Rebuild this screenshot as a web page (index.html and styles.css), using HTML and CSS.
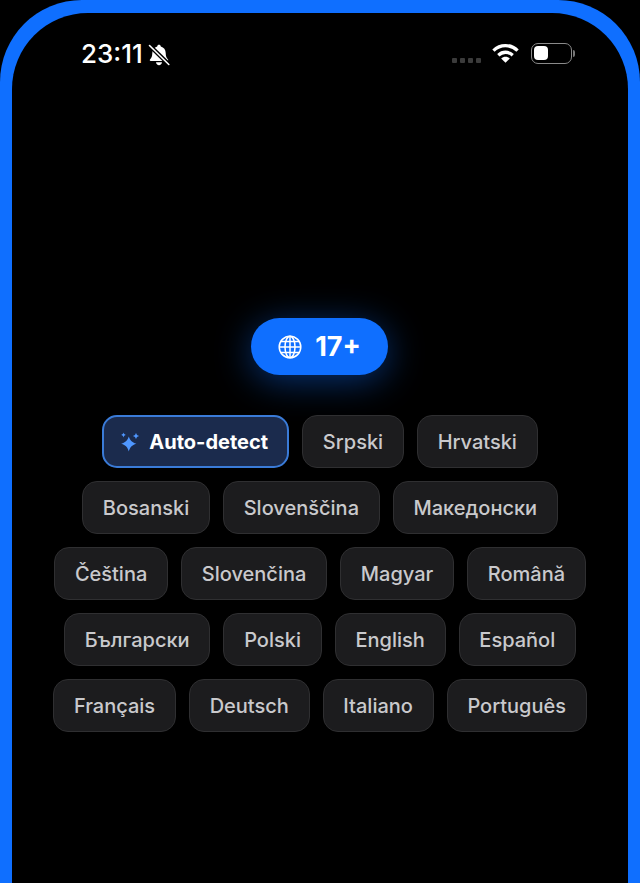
FILE: index.html
```html
<!DOCTYPE html>
<html lang="en">
<head>
<meta charset="utf-8">
<title>Languages</title>
<link rel="stylesheet" href="styles.css">
</head>
<body>
<main class="frame">
  <div class="screen">
    <header class="status">
      <div class="status-left">
        <span class="time">23:11</span>
        <svg class="bell" viewBox="0 0 22 22" aria-hidden="true">
          <path fill="#fff" d="M11 .8c1 0 1.700.7 1.800 1.600 3 .8 4.900 3.300 4.900 6.600 0 3.300.9 5 2.300 6.500.5.600.2 1.500-.7 1.500H2.700c-.9 0-1.200-.9-.7-1.500C3.400 14 4.300 12.300 4.300 9c0-3.300 1.900-5.800 4.900-6.600C9.300 1.500 10 .8 11 .8ZM8 18.300h6c-.2 1.700-1.400 2.900-3 2.900s-2.800-1.200-3-2.900Z"/>
          <path fill="none" stroke="#000" stroke-width="4.200" d="M1 1 21 20.500"/>
          <path fill="none" stroke="#fff" stroke-width="1.600" stroke-linecap="round" d="M1.500 1.500 20.800 20.500"/>
        </svg>
      </div>
      <div class="status-right">
        <div class="signal"><i></i><i></i><i></i><i></i></div>
        <svg class="wifi" viewBox="0 0 28 20" aria-hidden="true">
          <path fill="none" stroke="#fff" stroke-width="3.400" d="M1.500 7.500C8.500.600 19.500.600 26.500 7.500"/>
          <path fill="none" stroke="#fff" stroke-width="3.400" d="M6.500 12.300C11 8.200 17 8.200 21.500 12.300"/>
          <path fill="#fff" d="M14 20 9.500 15.600C12 13.300 16 13.300 18.500 15.600Z"/>
        </svg>
        <div class="battery"><div class="battery-level"></div></div>
        <div class="battery-tip"></div>
      </div>
    </header>

    <section class="content">
      <div class="badge">
        <svg class="globe" viewBox="0 0 24 24" aria-hidden="true">
          <g fill="none" stroke="#fff" stroke-width="1.500">
            <circle cx="12" cy="12" r="10.800"/>
            <ellipse cx="12" cy="12" rx="5" ry="10.800"/>
            <path d="M12 1.200v21.600M1.200 12h21.600M3 6.500h18M3 17.500h18"/>
          </g>
        </svg>
        <span>17+</span>
      </div>

      <div class="chips">
        <div class="row">
          <div class="chip chip-active">
            <svg class="sparkle" viewBox="0 0 20 20" aria-hidden="true">
              <path fill="#4f97ff" d="M8.800 4.500c1.200 3.800 3 5.800 7.600 7.300-4.600 1.500-6.400 3.500-7.600 7.700-1.200-4.200-3-6.200-7.600-7.700 4.600-1.500 6.400-3.500 7.600-7.300Z"/>
              <path fill="#4f97ff" d="M16 .8c.5 1.900 1.200 2.700 3.200 3.200-2 .5-2.700 1.300-3.200 3.200-.5-1.900-1.200-2.700-3.200-3.200 2-.5 2.700-1.300 3.200-3.200Z"/>
              <path fill="#4f97ff" d="M3.500.6c.4 1.400 1 2 2.400 2.400-1.400.4-2 1-2.400 2.400-.4-1.400-1-2-2.400-2.400 1.400-.4 2-1 2.400-2.400Z"/>
            </svg>
            Auto-detect
          </div>
          <div class="chip">Srpski</div>
          <div class="chip">Hrvatski</div>
        </div>
        <div class="row">
          <div class="chip">Bosanski</div>
          <div class="chip">Slovenščina</div>
          <div class="chip">Македонски</div>
        </div>
        <div class="row">
          <div class="chip">Čeština</div>
          <div class="chip">Slovenčina</div>
          <div class="chip">Magyar</div>
          <div class="chip">Română</div>
        </div>
        <div class="row">
          <div class="chip">Български</div>
          <div class="chip">Polski</div>
          <div class="chip">English</div>
          <div class="chip">Español</div>
        </div>
        <div class="row">
          <div class="chip">Français</div>
          <div class="chip">Deutsch</div>
          <div class="chip">Italiano</div>
          <div class="chip">Português</div>
        </div>
      </div>
    </section>
  </div>
</main>
</body>
</html>
```
FILE: styles.css
```css
* { box-sizing: border-box; }
html, body { margin: 0; height: 100%; background: #000; }
body { overflow: hidden; font-family: Inter, "Noto Sans", sans-serif; }

.frame {
  width: 640px;
  height: 883px;
  padding: 13px 12px 0;
  border-radius: 82px 82px 0 0;
  background: #0f6fff;
}
.screen {
  height: 100%;
  border-radius: 76px 76px 0 0;
  background: #000;
  display: flex;
  flex-direction: column;
}

.status {
  height: 48px;
  padding: 25px 53px 0 69px;
  display: flex;
  justify-content: space-between;
  align-items: flex-start;
  color: #fff;
}
.status-left { display: flex; align-items: center; gap: 5px; }
.time { font-size: 26px; line-height: 32px; font-weight: 500; }
.bell { width: 22px; height: 22px; margin-top: 1px; }
.status-right { display: flex; align-items: flex-start; margin-top: 5px; }
.signal { display: flex; gap: 3px; margin-top: 15px; margin-right: 11px; }
.signal i { width: 5px; height: 5px; border-radius: 1px; background: #3b3b3b; }
.wifi { width: 27px; height: 20px; margin-right: 12px; }
.battery {
  width: 41px;
  height: 21px;
  border: 1.500px solid #8a8a8a;
  border-radius: 7px;
  padding: 2px;
}
.battery-level { width: 14px; height: 14px; background: #fff; border-radius: 4px; }
.battery-tip { width: 2px; height: 7px; margin: 7px 0 0 1px; background: #777; border-radius: 0 2px 2px 0; }

.content {
  display: flex;
  flex-direction: column;
  align-items: center;
  padding-top: 257px;
}

.badge {
  width: 137px;
  height: 57px;
  margin-right: 1px;
  border-radius: 29px;
  background: #0f6fff;
  box-shadow: 0 6px 36px rgba(15, 111, 255, 0.45);
  display: flex;
  align-items: center;
  justify-content: center;
  gap: 13px;
  color: #fff;
  font-size: 27px;
  font-weight: 700;
}
.globe { width: 24px; height: 24px; }

.chips {
  margin-top: 40px;
  display: flex;
  flex-direction: column;
  gap: 13px;
}
.row { display: flex; justify-content: center; gap: 13px; }
.chip {
  height: 53px;
  padding: 0 19.750px;
  border: 1.500px solid #2f2f31;
  border-radius: 15px;
  background: #1c1c1e;
  color: #c9c9cc;
  font-size: 20px;
  font-weight: 500;
  display: flex;
  align-items: center;
  white-space: nowrap;
}
.chip-active {
  border: 2px solid #3a7bd8;
  background: #1b2b4d;
  color: #fff;
  font-weight: 700;
  gap: 9px;
  padding: 0 19px 0 16px;
}
.sparkle { width: 20px; height: 20px; }
```
